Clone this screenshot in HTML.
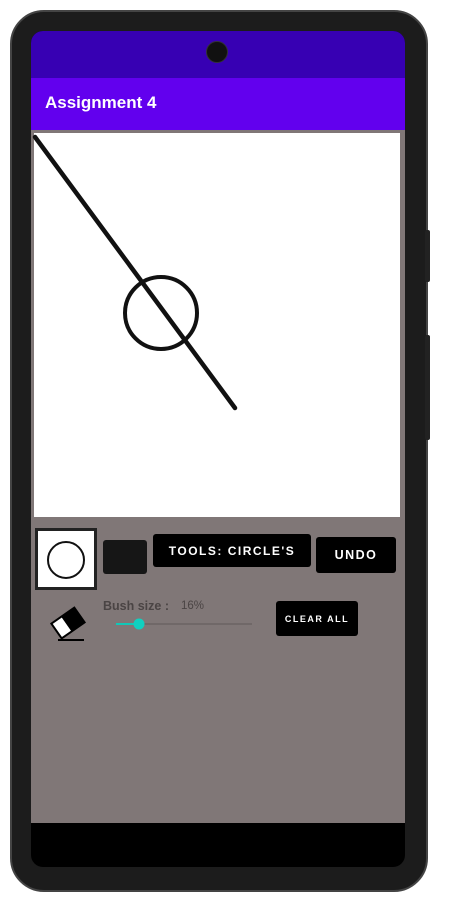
<!DOCTYPE html>
<html><head><style>
*{margin:0;padding:0;box-sizing:border-box}
body{width:450px;height:900px;background:#fff;position:relative;overflow:hidden;font-family:"Liberation Sans",sans-serif}
.abs{position:absolute}
.btn{position:absolute;background:#000;color:#fff;font-weight:bold;display:flex;align-items:center;justify-content:center;border-radius:3px;letter-spacing:1.5px}
</style></head><body>
<div class="abs" style="left:10px;top:10px;width:418px;height:882px;border-radius:34px;background:#1c1c1c;border:2px solid #444"></div>
<div class="abs" style="left:425px;top:230px;width:5px;height:52px;background:#222;border-radius:2px"></div>
<div class="abs" style="left:425px;top:335px;width:5px;height:105px;background:#222;border-radius:2px"></div>
<div class="abs" style="left:31px;top:31px;width:374px;height:836px;border-radius:12px;background:#000;overflow:hidden">
  <div class="abs" style="left:0;top:0;width:374px;height:47px;background:#3700b3"></div>
  <div class="abs" style="left:175px;top:10px;width:22px;height:22px;border-radius:50%;background:#111;border:1px solid #333"></div>
  <div class="abs" style="left:0;top:47px;width:374px;height:52px;background:#6200ee"></div>
  <div class="abs" style="left:14px;top:62px;color:#fff;font-size:17px;font-weight:bold">Assignment 4</div>
  <div class="abs" style="left:0;top:99px;width:374px;height:693px;background:#807777"></div>
  <div class="abs" style="left:3px;top:102px;width:366px;height:384px;background:#fff"></div>
</div>
<svg class="abs" style="left:0;top:0" width="450" height="900">
  <line x1="35" y1="137" x2="235" y2="408" stroke="#111" stroke-width="4.5" stroke-linecap="round"/>
  <circle cx="161" cy="313" r="36" fill="none" stroke="#111" stroke-width="4"/>
</svg>
<div class="abs" style="left:35px;top:528px;width:62px;height:62px;background:#fff;border:3px solid #222"></div>
<svg class="abs" style="left:0;top:0" width="450" height="900">
  <circle cx="66" cy="560" r="18" fill="none" stroke="#111" stroke-width="2"/>
  <g transform="translate(68,623) rotate(-35)">
    <rect x="-14" y="-9" width="28" height="18" fill="#fff" stroke="#000" stroke-width="2"/>
    <rect x="-2" y="-9" width="16" height="18" fill="#000"/>
  </g>
  <line x1="58" y1="640" x2="84" y2="640" stroke="#000" stroke-width="2"/>
  <line x1="116" y1="624" x2="252" y2="624" stroke="#6a6464" stroke-width="1.5"/>
  <line x1="116" y1="624" x2="139" y2="624" stroke="#10c8b8" stroke-width="2"/>
  <circle cx="139" cy="624" r="5.5" fill="#10d0c0"/>
</svg>
<div class="abs" style="left:103px;top:540px;width:44px;height:34px;background:#161616;border-radius:3px"></div>
<div class="btn" style="left:153px;top:534px;width:158px;height:33px;font-size:12px">TOOLS: CIRCLE'S</div>
<div class="btn" style="left:316px;top:537px;width:80px;height:36px;font-size:12.5px">UNDO</div>
<div class="btn" style="left:276px;top:601px;width:82px;height:35px;font-size:9px">CLEAR ALL</div>
<div class="abs" style="left:103px;top:599px;font-size:12.5px;color:#4a4444;font-weight:bold">Bush size :</div>
<div class="abs" style="left:181px;top:600px;font-size:11.5px;color:#4a4444">16%</div>
</body></html>
